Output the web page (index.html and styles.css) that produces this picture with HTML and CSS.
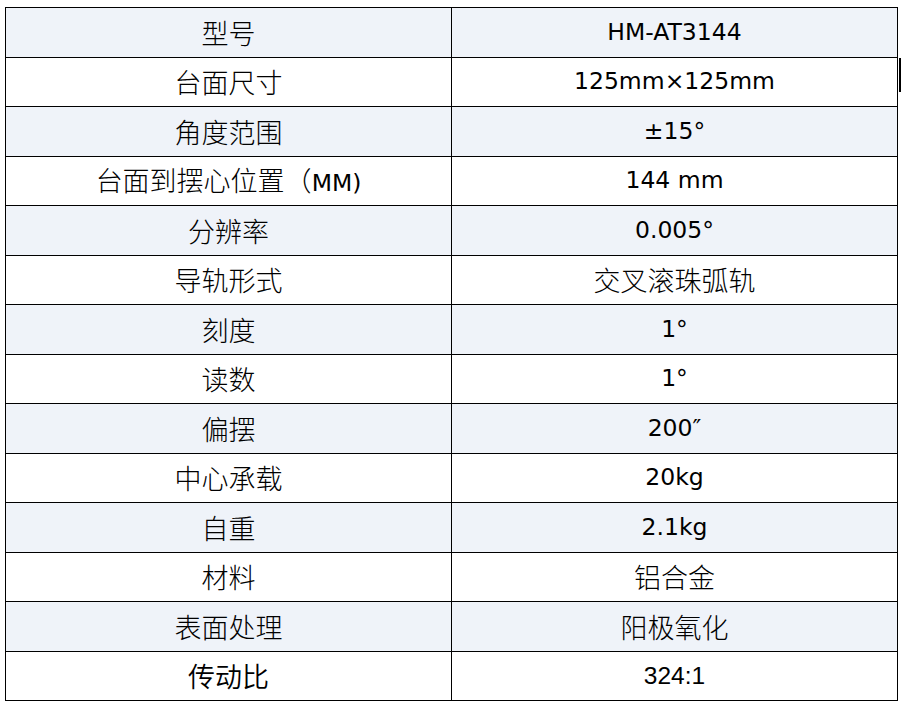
FILE: index.html
```html
<!DOCTYPE html>
<html lang="zh">
<head>
<meta charset="utf-8">
<link rel="stylesheet" href="styles.css">
</head>
<body>
<div class="page">
<table class="spec">
<tr class="alt"><td class="zh">型号</td><td class="num">HM-AT3144</td></tr>
<tr><td class="zh">台面尺寸</td><td class="num">125mm×125mm</td></tr>
<tr class="alt"><td class="zh">角度范围</td><td class="num">±15°</td></tr>
<tr><td class="zh">台面到摆心位置（<span class="lat">MM)</span></td><td class="num">144 mm</td></tr>
<tr class="alt"><td class="zh">分辨率</td><td class="num">0.005°</td></tr>
<tr><td class="zh">导轨形式</td><td class="zh">交叉滚珠弧轨</td></tr>
<tr class="alt"><td class="zh">刻度</td><td class="num">1°</td></tr>
<tr><td class="zh">读数</td><td class="num">1°</td></tr>
<tr class="alt"><td class="zh">偏摆</td><td class="num">200″</td></tr>
<tr><td class="zh">中心承载</td><td class="num">20kg</td></tr>
<tr class="alt"><td class="zh">自重</td><td class="num">2.1kg</td></tr>
<tr><td class="zh">材料</td><td class="zh">铝合金</td></tr>
<tr class="alt"><td class="zh">表面处理</td><td class="zh">阳极氧化</td></tr>
<tr><td class="zh sans">传动比</td><td class="arial">324:1</td></tr>
</table>
<div class="caret"></div>
</div>
</body>
</html>
```
FILE: styles.css
```css
html, body {
  margin: 0;
  padding: 0;
  background: #ffffff;
}
.page {
  position: relative;
  width: 902px;
  height: 704px;
  padding: 7px 0 0 5px;
  box-sizing: border-box;
}
.spec {
  border-collapse: collapse;
  width: 893px;
  table-layout: fixed;
  color: #000;
}
.spec td {
  border: 1px solid #000;
  text-align: center;
  vertical-align: middle;
  padding: 0;
  width: 50%;
  height: 48.5px;
  line-height: 1;
}
.spec tr.alt td {
  background: #eff3f9;
}
.zh {
  font-family: "Noto Sans CJK SC", "DejaVu Sans", sans-serif;
  font-size: 27px;
  font-weight: 300;
}
.sans {
  font-weight: 350;
}
.lat, .num {
  font-family: "DejaVu Sans", "Noto Sans CJK SC", sans-serif;
  font-size: 23.5px;
  font-weight: 400;
}
.arial {
  font-family: "Liberation Sans", Arial, sans-serif;
  font-size: 24.5px;
}
.caret {
  position: absolute;
  left: 899px;
  top: 58px;
  width: 2px;
  height: 34px;
  background: #000;
}
```
